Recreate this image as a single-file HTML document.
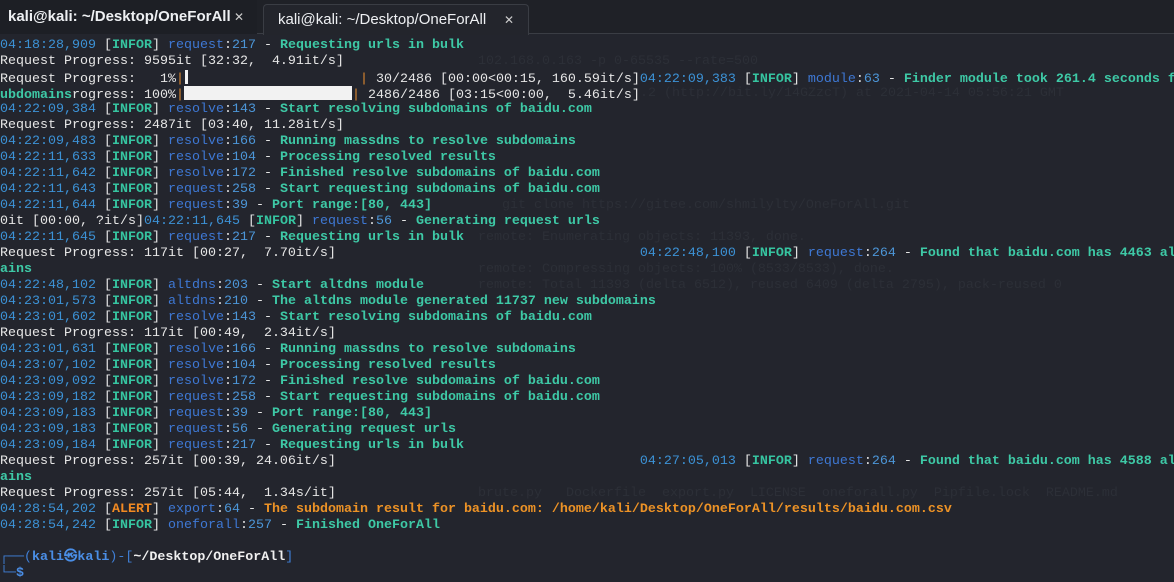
<!DOCTYPE html>
<html><head><meta charset="utf-8"><style>
html,body{margin:0;padding:0;}
body{width:1174px;height:570px;overflow:hidden;background:#23252d;position:relative;font-family:"Liberation Mono","DejaVu Sans Mono",monospace;}
.tabbar{position:absolute;left:0;top:0;width:1174px;height:33px;background:#1f2127;border-bottom:1px solid #3a3d44;}
.tab{position:absolute;top:2px;height:31px;font-family:"Liberation Sans","DejaVu Sans",sans-serif;font-size:15px;color:#eef0f3;line-height:31px;}
.t1{left:0;width:257px;background:#1d1f25;font-weight:bold;top:0;height:34px;line-height:34px;}
.t2{left:263px;width:264px;background:#23252c;border:1px solid #3a3d44;border-bottom:none;border-radius:4px 4px 0 0;top:4px;height:30px;line-height:30px;}
.tab span.x{position:absolute;font-size:12px;color:#ccc;}
.l{position:absolute;left:0;height:16px;line-height:16px;font-size:13.33px;white-space:pre;color:#e6e6e6;}
.ts{color:#3c92d6}.md{color:#3e78d4}.nm{color:#4c96d8}
.inf{color:#36c4a0;font-weight:bold}
.msg{color:#3ec9a6;font-weight:bold}
.al{color:#f28a22;font-weight:bold}
.alm{color:#ec9226;font-weight:bold}
.bar{display:inline-block;height:14px;vertical-align:-2px;background:#f2f2f2;}
.pb{color:#e08a30}
.pr{color:#3f7fd6}.prb{color:#4a8ee6;font-weight:bold}.pw{color:#f0f0f0;font-weight:bold}
.gh{position:absolute;color:#2c2f37;font-size:13.33px;white-space:pre;line-height:16px;}
</style></head><body>
<div class="gh" style="left:478px;top:54px">102.168.0.163 -p 0-65535 --rate=500</div>
<div class="gh" style="left:640px;top:86px">.2 (http://bit.ly/14GZzcT) at 2021-04-14 05:56:21 GMT</div>
<div class="gh" style="left:478px;top:198px">   git clone https://gitee.com/shmilylty/OneForAll.git</div>
<div class="gh" style="left:478px;top:230px">remote: Enumerating objects: 11393, done.</div>
<div class="gh" style="left:478px;top:262px">remote: Compressing objects: 100% (8533/8533), done.</div>
<div class="gh" style="left:478px;top:278px">remote: Total 11393 (delta 6512), reused 6409 (delta 2795), pack-reused 0</div>
<div class="gh" style="left:478px;top:486px">brute.py   Dockerfile  export.py  LICENSE  oneforall.py  Pipfile.lock  README.md</div>

<div class="tabbar"></div>
<div class="tab t1"><span style="position:absolute;left:8px">kali@kali: ~/Desktop/OneForAll</span><span class="x" style="left:234px">✕</span></div>
<div class="tab t2"><span style="position:absolute;left:14px">kali@kali: ~/Desktop/OneForAll</span><span class="x" style="left:240px">✕</span></div>

<div class="l" style="top:38px"><span class="ts">04:18:28,909</span> [<span class="inf">INFOR</span>] <span class="md">request</span>:<span class="nm">217</span> - <span class="msg">Requesting urls in bulk</span></div>
<div class="l" style="top:54px">Request Progress: 9595it [32:32,  4.91it/s]</div>
<div class="l" style="top:70px">Request Progress:   1%<span class="pb">|</span><span class="bar" style="width:3px;margin-left:1px"></span><span style="display:inline-block;width:172px"></span><span class="pb">|</span> 30/2486 [00:00&lt;00:15, 160.59it/s]<span class="ts">04:22:09,383</span> [<span class="inf">INFOR</span>] <span class="md">module</span>:<span class="nm">63</span> - <span class="msg">Finder module took 261.4 seconds f</span></div>
<div class="l" style="top:86px"><span class="msg">ubdomains</span>rogress: 100%<span class="pb">|</span><span class="bar" style="width:168px"></span><span class="pb">|</span> 2486/2486 [03:15&lt;00:00,  5.46it/s]</div>
<div class="l" style="top:102px"><span class="ts">04:22:09,384</span> [<span class="inf">INFOR</span>] <span class="md">resolve</span>:<span class="nm">143</span> - <span class="msg">Start resolving subdomains of baidu.com</span></div>
<div class="l" style="top:118px">Request Progress: 2487it [03:40, 11.28it/s]</div>
<div class="l" style="top:134px"><span class="ts">04:22:09,483</span> [<span class="inf">INFOR</span>] <span class="md">resolve</span>:<span class="nm">166</span> - <span class="msg">Running massdns to resolve subdomains</span></div>
<div class="l" style="top:150px"><span class="ts">04:22:11,633</span> [<span class="inf">INFOR</span>] <span class="md">resolve</span>:<span class="nm">104</span> - <span class="msg">Processing resolved results</span></div>
<div class="l" style="top:166px"><span class="ts">04:22:11,642</span> [<span class="inf">INFOR</span>] <span class="md">resolve</span>:<span class="nm">172</span> - <span class="msg">Finished resolve subdomains of baidu.com</span></div>
<div class="l" style="top:182px"><span class="ts">04:22:11,643</span> [<span class="inf">INFOR</span>] <span class="md">request</span>:<span class="nm">258</span> - <span class="msg">Start requesting subdomains of baidu.com</span></div>
<div class="l" style="top:198px"><span class="ts">04:22:11,644</span> [<span class="inf">INFOR</span>] <span class="md">request</span>:<span class="nm">39</span> - <span class="msg">Port range:[80, 443]</span></div>
<div class="l" style="top:214px">0it [00:00, ?it/s]<span class="ts">04:22:11,645</span> [<span class="inf">INFOR</span>] <span class="md">request</span>:<span class="nm">56</span> - <span class="msg">Generating request urls</span></div>
<div class="l" style="top:230px"><span class="ts">04:22:11,645</span> [<span class="inf">INFOR</span>] <span class="md">request</span>:<span class="nm">217</span> - <span class="msg">Requesting urls in bulk</span></div>
<div class="l" style="top:246px">Request Progress: 117it [00:27,  7.70it/s]                                      <span class="ts">04:22:48,100</span> [<span class="inf">INFOR</span>] <span class="md">request</span>:<span class="nm">264</span> - <span class="msg">Found that baidu.com has 4463 al</span></div>
<div class="l" style="top:262px"><span class="msg">ains</span></div>
<div class="l" style="top:278px"><span class="ts">04:22:48,102</span> [<span class="inf">INFOR</span>] <span class="md">altdns</span>:<span class="nm">203</span> - <span class="msg">Start altdns module</span></div>
<div class="l" style="top:294px"><span class="ts">04:23:01,573</span> [<span class="inf">INFOR</span>] <span class="md">altdns</span>:<span class="nm">210</span> - <span class="msg">The altdns module generated 11737 new subdomains</span></div>
<div class="l" style="top:310px"><span class="ts">04:23:01,602</span> [<span class="inf">INFOR</span>] <span class="md">resolve</span>:<span class="nm">143</span> - <span class="msg">Start resolving subdomains of baidu.com</span></div>
<div class="l" style="top:326px">Request Progress: 117it [00:49,  2.34it/s]</div>
<div class="l" style="top:342px"><span class="ts">04:23:01,631</span> [<span class="inf">INFOR</span>] <span class="md">resolve</span>:<span class="nm">166</span> - <span class="msg">Running massdns to resolve subdomains</span></div>
<div class="l" style="top:358px"><span class="ts">04:23:07,102</span> [<span class="inf">INFOR</span>] <span class="md">resolve</span>:<span class="nm">104</span> - <span class="msg">Processing resolved results</span></div>
<div class="l" style="top:374px"><span class="ts">04:23:09,092</span> [<span class="inf">INFOR</span>] <span class="md">resolve</span>:<span class="nm">172</span> - <span class="msg">Finished resolve subdomains of baidu.com</span></div>
<div class="l" style="top:390px"><span class="ts">04:23:09,182</span> [<span class="inf">INFOR</span>] <span class="md">request</span>:<span class="nm">258</span> - <span class="msg">Start requesting subdomains of baidu.com</span></div>
<div class="l" style="top:406px"><span class="ts">04:23:09,183</span> [<span class="inf">INFOR</span>] <span class="md">request</span>:<span class="nm">39</span> - <span class="msg">Port range:[80, 443]</span></div>
<div class="l" style="top:422px"><span class="ts">04:23:09,183</span> [<span class="inf">INFOR</span>] <span class="md">request</span>:<span class="nm">56</span> - <span class="msg">Generating request urls</span></div>
<div class="l" style="top:438px"><span class="ts">04:23:09,184</span> [<span class="inf">INFOR</span>] <span class="md">request</span>:<span class="nm">217</span> - <span class="msg">Requesting urls in bulk</span></div>
<div class="l" style="top:454px">Request Progress: 257it [00:39, 24.06it/s]                                      <span class="ts">04:27:05,013</span> [<span class="inf">INFOR</span>] <span class="md">request</span>:<span class="nm">264</span> - <span class="msg">Found that baidu.com has 4588 al</span></div>
<div class="l" style="top:470px"><span class="msg">ains</span></div>
<div class="l" style="top:486px">Request Progress: 257it [05:44,  1.34s/it]</div>
<div class="l" style="top:502px"><span class="ts">04:28:54,202</span> [<span class="al">ALERT</span>] <span class="md">export</span>:<span class="nm">64</span> - <span class="alm">The subdomain result for baidu.com: /home/kali/Desktop/OneForAll/results/baidu.com.csv</span></div>
<div class="l" style="top:518px"><span class="ts">04:28:54,242</span> [<span class="inf">INFOR</span>] <span class="md">oneforall</span>:<span class="nm">257</span> - <span class="msg">Finished OneForAll</span></div>
<div class="l" style="top:550px"><span class="pr">┌──(</span><span class="prb">kali㉿kali</span><span class="pr">)-[</span><span class="pw">~/Desktop/OneForAll</span><span class="pr">]</span></div>
<div class="l" style="top:566px"><span class="pr">└─</span><span class="prb">$</span></div>
</body></html>
